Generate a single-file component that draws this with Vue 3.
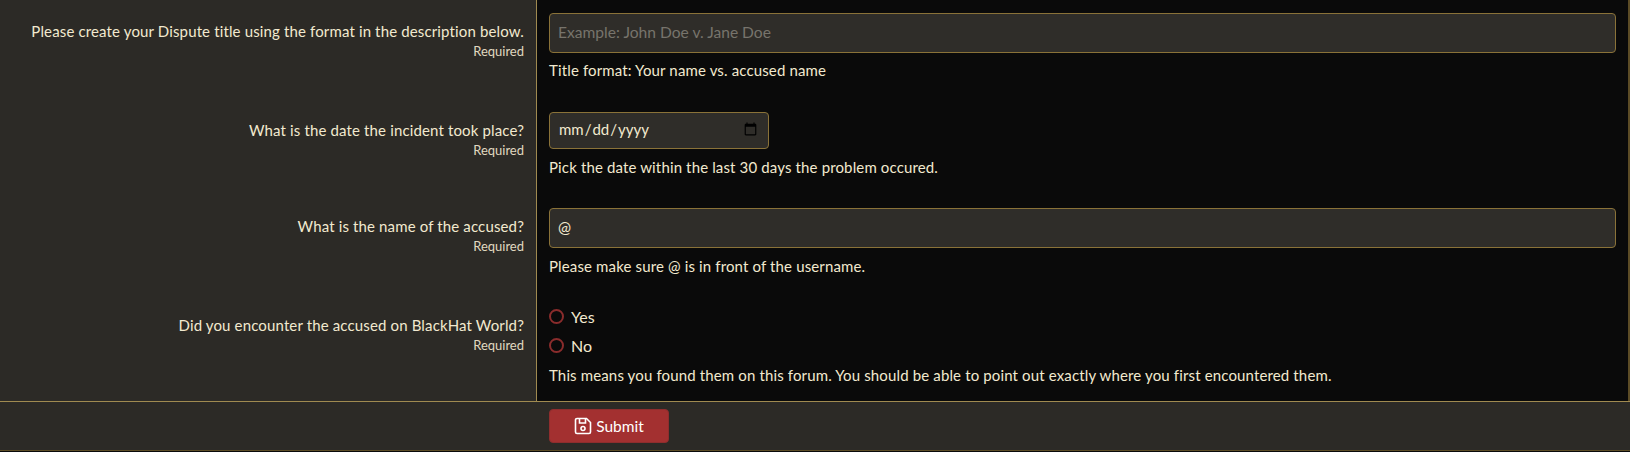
<script setup>
const rows = [
  {
    label: 'Please create your Dispute title using the format in the description below.',
    type: 'text',
    placeholder: 'Example: John Doe v. Jane Doe',
    explain: 'Title format: Your name vs. accused name',
  },
  {
    label: 'What is the date the incident took place?',
    type: 'date',
    explain: 'Pick the date within the last 30 days the problem occured.',
  },
  {
    label: 'What is the name of the accused?',
    type: 'text',
    value: '@',
    explain: 'Please make sure @ is in front of the username.',
  },
  {
    label: 'Did you encounter the accused on BlackHat World?',
    type: 'radio',
    options: ['Yes', 'No'],
    explain: 'This means you found them on this forum. You should be able to point out exactly where you first encountered them.',
  },
]
</script>

<template>
  <form class="form" @submit.prevent>
    <div class="rows">
      <div v-for="(row, i) in rows" :key="i" class="row" :class="'row-' + row.type">
        <div class="label-col">
          <label class="label">{{ row.label }}</label>
          <div class="hint">Required</div>
        </div>
        <div class="field-col">
          <input
            v-if="row.type === 'text'"
            class="input"
            type="text"
            :placeholder="row.placeholder"
            :value="row.value"
          />
          <input v-else-if="row.type === 'date'" class="input input-date" type="date" />
          <div v-else class="radios">
            <label v-for="opt in row.options" :key="opt" class="radio">
              <input type="radio" name="encounter" />
              <span>{{ opt }}</span>
            </label>
          </div>
          <div class="explain">{{ row.explain }}</div>
        </div>
      </div>
    </div>
    <div class="footer">
      <button class="submit" type="submit">
        <svg width="18" height="18" viewBox="0 0 18 18" fill="none" stroke="currentColor" stroke-width="1.6">
          <path d="M3 1.5h9.5l4 4v9.5a1.5 1.5 0 0 1-1.5 1.5H3A1.5 1.5 0 0 1 1.5 15V3A1.5 1.5 0 0 1 3 1.5z" />
          <path d="M5.5 2v4h6V2" />
          <circle cx="9" cy="11.5" r="2" />
        </svg>
        <span>Submit</span>
      </button>
    </div>
  </form>
</template>

<style>
html,
body {
  background: #0a0a0a;
}
</style>

<style scoped>
.form {
  width: 1630px;
  height: 451px;
  box-sizing: border-box;
  display: flex;
  flex-direction: column;
  background: #2c2a26;
  border-bottom: 1px solid #5c4c26;
  font-family: Lato, "Open Sans", sans-serif;
  font-size: 15px;
  letter-spacing: 0.14px;
  color: #f2e9cf;
}

.rows {
  height: 401px;
  display: flex;
  flex-direction: column;
  border-right: 2px solid #5c4c26;
  box-sizing: border-box;
}

.row {
  display: flex;
  height: 99px;
}

.row-date {
  height: 96px;
}

.row-radio {
  flex: 1;
}

.label-col {
  width: 524px;
  padding: 20px 12px 0 0;
  flex-shrink: 0;
  text-align: right;
  border-right: 1px solid #a08a50;
}

.label {
  display: block;
  line-height: 22px;
}

.hint {
  font-size: 13px;
  line-height: 18px;
  letter-spacing: 0;
  color: #e0d8c0;
}

.field-col {
  flex: 1;
  padding: 13px 12px 0 12px;
  background: #0a0a0a;
}

.input {
  display: block;
  width: 100%;
  height: 40px;
  box-sizing: border-box;
  padding: 0 8px 3px;
  background: #2f2d29;
  border: 1px solid #8a7238;
  border-radius: 4px;
  color: #f2e9cf;
  font: inherit;
  font-size: 15.6px;
  letter-spacing: 0;
  outline: none;
}

.input::placeholder {
  color: #77746c;
}

.input-date {
  width: 220px;
  height: 37px;
  font-size: 15px;
}

.explain {
  margin-top: 7px;
  line-height: 22px;
}

.row:first-child .explain {
  margin-top: 6px;
}

.row-radio .field-col {
  padding-top: 11px;
}

.row-radio .explain {
  margin-top: 8px;
}

.radios {
  display: flex;
  flex-direction: column;
  gap: 7px;
}

.radio {
  display: flex;
  align-items: center;
  gap: 7px;
  height: 22px;
  font-size: 16px;
  letter-spacing: 0;
}

.radio input {
  appearance: none;
  width: 15px;
  height: 15px;
  margin: 1px 0 0;
  border: 2px solid #8a2c2c;
  border-radius: 50%;
}

.footer {
  flex: 1;
  padding: 7px 0 0 549px;
  border-top: 1px solid #a08a50;
}

.submit {
  display: flex;
  align-items: center;
  justify-content: center;
  gap: 4px;
  width: 120px;
  height: 34px;
  background: #a33030;
  border: 1px solid #8f2d2d;
  border-radius: 4px;
  color: #fff;
  font: inherit;
  font-size: 15.5px;
}
</style>
